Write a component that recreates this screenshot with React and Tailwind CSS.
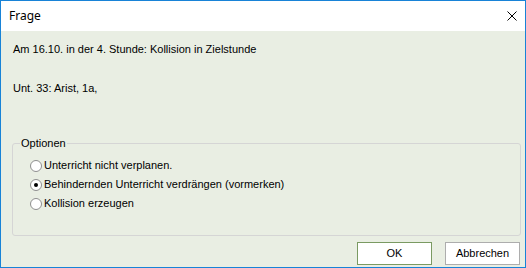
import React, { useState } from "react";

const options = [
  "Unterricht nicht verplanen.",
  "Behindernden Unterricht verdrängen (vormerken)",
  "Kollision erzeugen",
];

function Radio({ checked }) {
  return (
    <span className="w-[12px] h-[12px] rounded-full border border-[#8f8f8f] bg-white flex items-center justify-center shrink-0">
      {checked ? <span className="w-[4px] h-[4px] rounded-full bg-black" /> : null}
    </span>
  );
}

export default function App() {
  const [choice, setChoice] = useState(1);

  return (
    <div className="w-[526px] h-[268px] border border-[#1883d7] bg-[#e9eee3] flex flex-col text-[11px] text-black font-['Liberation_Sans',Arial,sans-serif] overflow-hidden">
      <div className="h-[30px] bg-white flex items-center justify-between shrink-0">
        <span className="pl-[8px] text-[12px] font-['Noto_Sans','Segoe_UI',sans-serif]">Frage</span>
        <svg className="mr-[8px]" width="10" height="10" viewBox="0 0 10 10">
          <path d="M0.5 0.5 L9.5 9.5 M9.5 0.5 L0.5 9.5" stroke="#000" strokeWidth="1" />
        </svg>
      </div>

      <div className="flex-1 flex flex-col pl-[11px] pr-[4px]">
        <p className="pl-[1px] mt-[12px] leading-[13px]">Am 16.10. in der 4. Stunde: Kollision in Zielstunde</p>
        <p className="pl-[1px] mt-[26px] leading-[13px]">Unt. 33: Arist, 1a,</p>

        <fieldset className="mt-[42px] h-[99px] border border-[#d5d5d5] rounded-[3px] pl-[17px] pr-[8px] pt-[1px]">
          <legend className="px-[1px] ml-[-10px] leading-[13px]">Optionen</legend>
          <div className="flex flex-col gap-[6px] mt-[8px]">
            {options.map((o, i) => (
              <label key={o} className="flex items-center gap-[2px] h-[13px]" onClick={() => setChoice(i)}>
                <Radio checked={choice === i} />
                <span className="leading-[13px]">{o}</span>
              </label>
            ))}
          </div>
        </fieldset>

        <div className="flex justify-end gap-[13px] mt-[6px] pr-[1px]">
          <button className="w-[75px] h-[23px] bg-white border border-[#7a9a62]">OK</button>
          <button className="w-[75px] h-[23px] bg-white border border-[#adadad]">Abbrechen</button>
        </div>
      </div>
    </div>
  );
}
